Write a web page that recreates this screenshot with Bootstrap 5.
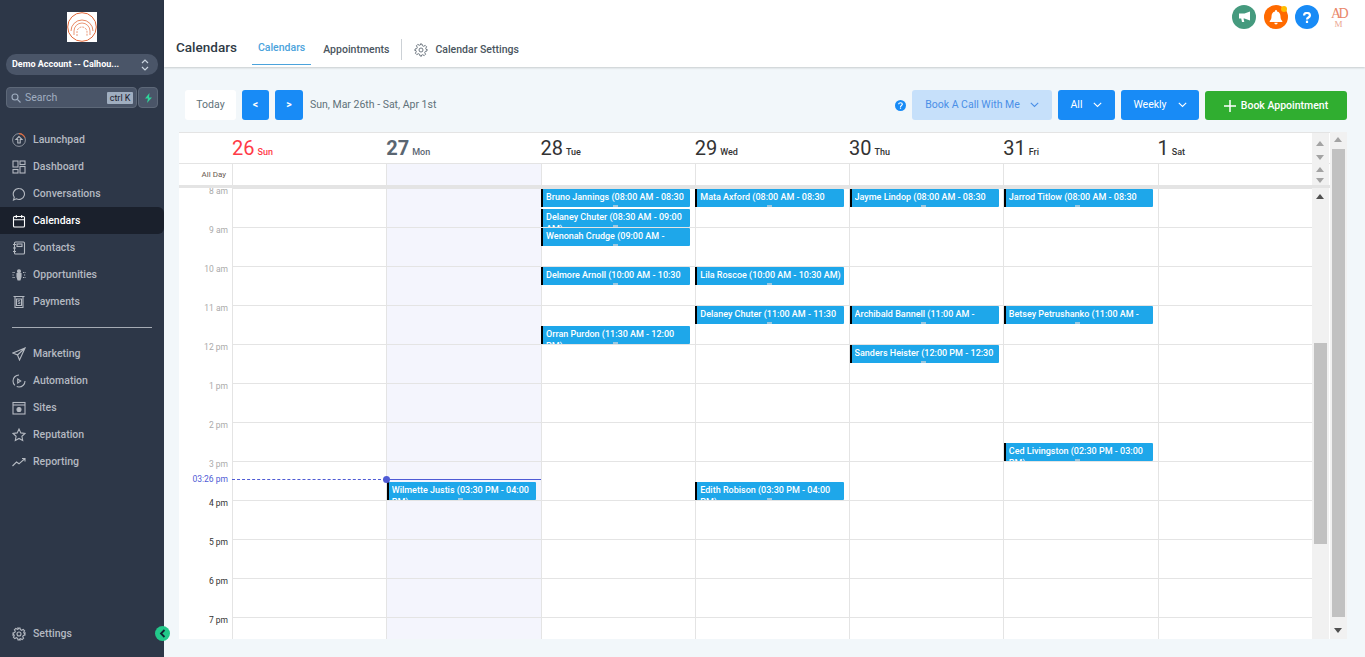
<!DOCTYPE html>
<html lang="en">
<head>
<meta charset="utf-8">
<title>Calendars</title>
<link href="https://cdn.jsdelivr.net/npm/bootstrap@5.3.0/dist/css/bootstrap.min.css" rel="stylesheet">
<style>
html,body{height:657px;overflow:hidden}
body{font-family:Roboto,"Liberation Sans",sans-serif;background:#f2f7fa;color:#3c4650}
.app-side{width:164px;height:657px;background:#2d3748;flex:none;position:relative}
.logo-box{width:30px;height:30px;background:#fff;margin:12px auto 12px}
.logo-box svg{display:block}
.acct-pill{margin:0 6px;height:21px;border-radius:10px;background:#4a5568;color:#fff;font-size:9px;font-weight:700;padding:0 9px 0 6px}
.acct-pill span{padding-top:1px}
.srch-row{margin:12px 6px 0;gap:1px;height:21px}
.srch-box{width:131px;background:#4a5568;border:1px solid #5d6878;border-radius:4px;color:#a0aec0;font-size:10.5px;padding:0 3px 0 4px}
.kbd-chip{background:#a0aec0;color:#1a202c;font-size:9px;padding:0 2.5px;line-height:12px;border-radius:1px}
.flash-box{width:20px;background:#4a5568;border:1px solid #5d6878;border-radius:4px}
.side-nav{margin-top:18px}
.side-link{height:27px;padding:0 0 0 12px;color:#b4b9c1;font-size:10.5px;font-weight:500;gap:7px;border-radius:0 6px 6px 0}
.side-link svg{width:14px;height:14px;flex:none;stroke:#b4b9c1;fill:none;stroke-width:1.1}
.side-link:hover{color:#b4b9c1}
.side-link.on{background:#1a202c;color:#fff}
.side-link.on svg{stroke:#fff}
.side-rule{border-top:1px solid #a5abb4;margin:12px 12px 12px;opacity:1}
.side-foot{margin-top:auto;margin-bottom:10px}
.tog-btn{position:absolute;left:155px;top:626px;width:15px;height:15px;border-radius:50%;background:#22c88a}
.top-bar{height:67px;background:#fff;box-shadow:0 1px 2px rgba(0,0,0,.18);position:relative;padding:0 18px 2px 12px}
.page-title{font-size:13.5px;line-height:16px;font-weight:500;color:#2f3a45;margin:0 15px 10px 0}
.tab-item{font-size:10.5px;font-weight:500;color:#4a5560;padding:0 6px;height:31px;margin-right:6px}
.tab-item.on{color:#4ba3dc;border-bottom:1px solid #4ba3dc;padding-bottom:2px}
.tab-sep{width:1px;height:21px;background:#ccd1d6;margin:0 12px 5px 0}
.tab-gear{margin-right:-1px}
.ico-round{width:24px;height:24px;border-radius:50%;flex:none;position:relative}
.ico-green{background:#459a7e}.ico-orange{background:#ff6a00}.ico-blue{background:#188bf6}
.bell-dot{position:absolute;top:1px;right:1px;width:6px;height:6px;border-radius:50%;background:#ffbc00}
.top-icons{position:absolute;right:18px;top:5px;gap:7.5px}
.adm-mark{width:17px;height:24px;margin-left:3.5px;color:#e9866a;font-family:"Liberation Serif",serif;font-size:14px;line-height:13px;text-align:center;letter-spacing:-2.5px;padding-top:2px}
.adm-mark span{display:block;font-size:9px;line-height:9px;letter-spacing:0;color:#eba58f}
.tool-bar{margin:23px 18px 12px 21px;height:30px;gap:6px}
.tool-end{gap:6px}
.act-btn{height:30px;font-size:10.5px;border:0;border-radius:3px;padding:0;display:inline-flex;align-items:center;justify-content:center;--bs-btn-font-size:10.5px}
.btn-today{width:51px;background:#fff;color:#607179}
.btn-nav{width:27px;background:#188bf6;color:#fff;font-weight:700}
.btn-nav2{width:28px}
.date-txt{font-size:10.5px;color:#607179;margin-left:1px}
.btn-soft{width:140px;background:#c6e0fa;color:#4a8fe7;gap:10px}
.btn-solid{background:#188bf6;color:#fff;gap:11px}
.btn-w1{width:57px}.btn-w2{width:78px}
.btn-go{width:142px;height:29px;margin-top:1px;background:#30ae30;color:#fff;font-weight:500;gap:5px}
.cal-shell{margin-left:15px;width:1167.5px;height:507px;background:#fff}
.cal-main{width:1151px;flex:none;height:507px}
.hd-row{display:grid;grid-template-columns:53px repeat(7,154.28px) 18px}
.hd-one{height:32px;border-top:1px solid #e4e4e4;border-bottom:1px solid #e4e4e4}
.hd-two{height:21px}
.hd-bar{height:3px;background:#e4e4e4;width:1151px}
.day-hd{padding:0;white-space:nowrap;line-height:30px;color:#333}
.day-num{font-size:20px;margin-right:-1px}
.day-nm{font-size:9px;font-weight:500}
.sun-red{color:#ff3b47}
.now-grey{color:#5a6672}.now-grey .day-num{font-weight:700}
.allday-lbl{font-size:8px;text-align:right;padding-right:6px;line-height:21px;color:#6a5a50}
.day-cell{border-left:1px solid #e4e4e4}
.tint{background:#f4f5fd}
.sb-track{background:#f1f1f1;width:17px;align-items:center}
.tri-up,.tri-dn{width:0;height:0;border-left:4px solid transparent;border-right:4px solid transparent}
.tri-up{border-bottom:5px solid #a3a3a3}
.tri-dn{border-top:5px solid #a3a3a3}
.tri-dark.tri-up{border-bottom-color:#505050}
.tri-dark.tri-dn{border-top-color:#505050}
.hd-sb{justify-content:center;gap:9px}
.hd-two .hd-sb{gap:6px}
.grid-body{display:grid;grid-template-columns:53px repeat(7,154.28px) 18px;height:451px;overflow:hidden;position:relative}
.time-col{margin-top:-2px;text-align:right;padding-right:4px;font-size:8.5px;color:#aaa}
.time-lbl{height:39px;line-height:10px}
.time-lbl.dark{color:#333}
.day-col{position:relative;border-left:1px solid #e4e4e4;background-image:repeating-linear-gradient(#e4e4e4 0 1px,transparent 1px 39px)}
.cal-ev{position:absolute;left:-.5px;width:149px;height:18px;background:#1ea7ea;border-left:2px solid #000;border-radius:0 1px 1px 0;color:#fff;font-size:9px;font-weight:500;line-height:12px;padding:2px 1px 0 3px;overflow:hidden}
.ev-txt{display:block;height:13px;overflow:hidden}
.half .ev-txt{height:16px}
.cal-ev::after{content:"";position:absolute;left:calc(50% - 4px);bottom:0;width:5px;height:2px;background:#9cc8e0}
.now-lbl{position:absolute;left:0;top:286px;width:49px;text-align:right;font-size:8.5px;line-height:10px;color:#4f5bd5}
.now-dash{position:absolute;left:53px;top:291px;width:154px;border-top:1px dashed #4f5bd5}
.now-solid{position:absolute;left:207px;top:291px;width:155px;border-top:1px solid #4f5bd5}
.now-dot{position:absolute;left:204px;top:288px;width:7px;height:7px;border-radius:50%;background:#4f5bd5}
.body-sb{justify-content:space-between;padding:6px 0 6px;position:relative}
.in-thumb{position:absolute;left:2px;top:155px;width:13px;height:201px;background:#c1c1c1}
.out-sb{width:16.5px;background:#f1f1f1;padding:5px 0 6px;position:relative}
.out-thumb{position:absolute;left:2px;top:17px;width:13px;height:468px;background:#c1c1c1}
</style>
</head>
<body>
<div class="d-flex">
<aside class="app-side d-flex flex-column">
  <div class="logo-box">
    <svg width="30" height="30" viewBox="0 0 30 30" fill="none" stroke="#e0683a"><circle cx="15" cy="15" r="14.3"/><path d="M4 19a11 11 0 0 1 22 0" stroke-width=".8"/><path d="M7 23v-4a8 8 0 0 1 16 0v4" stroke-width=".7"/><path d="M10 24v-4a5 5 0 0 1 10 0v4" stroke-dasharray="2 1" stroke-width=".7"/></svg>
  </div>
  <div class="acct-pill d-flex align-items-center justify-content-between">
    <span>Demo Account -- Calhou...</span>
    <svg width="8" height="14" viewBox="0 0 8 14" fill="none" stroke="#cbd5e0" stroke-width="1.2"><path d="M1 5l3-3 3 3M1 9l3 3 3-3"/></svg>
  </div>
  <div class="srch-row d-flex">
    <div class="srch-box d-flex align-items-center">
      <svg class="me-1" width="10" height="10" viewBox="0 0 10 10" fill="none" stroke="#a0aec0" stroke-width="1.1"><circle cx="4" cy="4" r="3"/><path d="M6.500 6.500L9.500 9.500"/></svg>
      <span>Search</span>
      <span class="kbd-chip ms-auto">ctrl K</span>
    </div>
    <div class="flash-box d-flex align-items-center justify-content-center">
      <svg width="9" height="10" viewBox="0 0 9 10"><path d="M5.500 0L1 5.500h3L3 10l5-5.500H5z" fill="#2fd49a"/></svg>
    </div>
  </div>
  <nav class="nav flex-column side-nav">
    <a class="nav-link side-link d-flex align-items-center" href="#"><svg viewBox="0 0 14 14"><circle cx="7" cy="7" r="6.400" stroke-width=".7"/><path d="M7 .6a6.400 6.400 0 0 1 5.800 4" stroke="#e0683a"/><path d="M7 3.500L4 6.500h1.800V10h2.400V6.500H10z"/></svg>Launchpad</a>
    <a class="nav-link side-link d-flex align-items-center" href="#"><svg viewBox="0 0 14 14"><rect x="1" y="1" width="5" height="6"/><rect x="8" y="1" width="5" height="3.500"/><rect x="1" y="9.500" width="5" height="3.500"/><rect x="8" y="6.500" width="5" height="6.500"/></svg>Dashboard</a>
    <a class="nav-link side-link d-flex align-items-center" href="#"><svg viewBox="0 0 14 14"><path d="M7 1.500a5.500 5.500 0 1 1-2.700 10.300L1.500 13l.8-2.800A5.500 5.500 0 0 1 7 1.500z"/></svg>Conversations</a>
    <a class="nav-link side-link on d-flex align-items-center" href="#"><svg viewBox="0 0 14 14"><rect x="1.500" y="2.500" width="11" height="10.500" rx="1"/><path d="M1.500 5.800h11M4.300 1v3M9.700 1v3"/></svg>Calendars</a>
    <a class="nav-link side-link d-flex align-items-center" href="#"><svg viewBox="0 0 14 14"><rect x="2.500" y="1" width="10" height="12" rx="1"/><rect x="5" y="3" width="5" height="2.500"/><path d="M1 3.500h3M1 7h3M1 10.500h3"/></svg>Contacts</a>
    <a class="nav-link side-link d-flex align-items-center" href="#"><svg viewBox="0 0 14 14"><circle cx="7" cy="3.200" r="1.500" fill="#b4b9c1"/><path d="M5 5.500h4v3.500l-1 3H6L5 9z" fill="#b4b9c1"/><path d="M.5 4.500h2.500M.5 7h1.500M.5 9.500H3M11 4.500h2.500M12 7h1.500M11 9.500h2.500" stroke-dasharray="1.200 .6"/></svg>Opportunities</a>
    <a class="nav-link side-link d-flex align-items-center" href="#"><svg viewBox="0 0 14 14"><path d="M1.500 1.500h11M3 1.500v11h8v-11M4.500 4h5v6.500h-5z"/><path d="M8 5.500H6.200v1.500h1.600v1.500H6" stroke-width=".8"/></svg>Payments</a>
    <hr class="side-rule">
    <a class="nav-link side-link d-flex align-items-center" href="#"><svg viewBox="0 0 14 14"><path d="M13 1L1 6l4.500 2L7.500 13zM13 1L5.500 8"/></svg>Marketing</a>
    <a class="nav-link side-link d-flex align-items-center" href="#"><svg viewBox="0 0 14 14"><path d="M7 1a6 6 0 1 0 6 6" stroke-dasharray="14 2"/><path d="M5.700 5l3 2-3 2z"/></svg>Automation</a>
    <a class="nav-link side-link d-flex align-items-center" href="#"><svg viewBox="0 0 14 14"><rect x="1" y="1.500" width="12" height="11.500"/><path d="M1 4h12"/><circle cx="7" cy="8.500" r="2" fill="#b4b9c1"/></svg>Sites</a>
    <a class="nav-link side-link d-flex align-items-center" href="#"><svg viewBox="0 0 14 14"><path d="M7 1l1.800 3.900 4.200.5-3.100 2.900.8 4.200L7 10.500l-3.700 2 .8-4.200L1 5.400l4.200-.5z"/></svg>Reputation</a>
    <a class="nav-link side-link d-flex align-items-center" href="#"><svg viewBox="0 0 14 14"><path d="M.5 11l4-4 2.500 1.800L13 3.500M10 3.500h3v3"/></svg>Reporting</a>
  </nav>
  <div class="side-foot">
    <a class="nav-link side-link d-flex align-items-center" href="#"><svg viewBox="0 0 14 14"><circle cx="7" cy="7" r="2"/><path d="M6 1h2l.4 1.700 1.300.6 1.500-.9 1.400 1.400-.9 1.500.6 1.300L13 6v2l-1.700.4-.6 1.300.9 1.500-1.400 1.400-1.500-.9-1.300.6L8 13H6l-.4-1.700-1.300-.6-1.500.9-1.400-1.400.9-1.500-.6-1.300L1 8V6l1.700-.4.6-1.300-.9-1.500 1.400-1.400 1.500.9 1.300-.6z"/></svg>Settings</a>
  </div>
  <div class="tog-btn d-flex align-items-center justify-content-center">
    <svg width="7" height="9" viewBox="0 0 7 9" fill="none" stroke="#123" stroke-width="1.800"><path d="M5.500 1L2 4.500 5.500 8"/></svg>
  </div>
</aside>

<main class="flex-grow-1">
  <header class="top-bar d-flex align-items-end">
    <h1 class="page-title">Calendars</h1>
    <a class="tab-item on d-flex align-items-center text-decoration-none" href="#">Calendars</a>
    <a class="tab-item d-flex align-items-center text-decoration-none" href="#">Appointments</a>
    <span class="tab-sep"></span>
    <a class="tab-item d-flex align-items-center text-decoration-none gap-2 px-0" href="#">
      <svg class="tab-gear" width="14" height="14" viewBox="0 0 14 14" fill="none" stroke="#606a74" stroke-width=".9"><circle cx="7" cy="7" r="2"/><path d="M6 1h2l.4 1.700 1.300.6 1.500-.9 1.400 1.400-.9 1.500.6 1.300L13 6v2l-1.700.4-.6 1.300.9 1.500-1.400 1.400-1.500-.9-1.300.6L8 13H6l-.4-1.700-1.300-.6-1.500.9-1.400-1.400.9-1.500-.6-1.300L1 8V6l1.700-.4.6-1.300-.9-1.500 1.400-1.400 1.500.9 1.300-.6z"/></svg>
      Calendar Settings
    </a>
    <div class="top-icons d-flex">
      <span class="ico-round ico-green d-flex align-items-center justify-content-center"><svg width="13" height="12" viewBox="0 0 13 12" fill="#fff"><path d="M12 .5v9L6.500 7.500H5.500l.8 3.500H4L3.200 7.500H1V2.500h5.500z"/></svg></span>
      <span class="ico-round ico-orange d-flex align-items-center justify-content-center"><svg width="14" height="15" viewBox="0 0 14 15" fill="#fff"><path d="M7 0a1 1 0 0 1 1 1v.6C10.300 2 11.500 4 11.500 6.500c0 2.500.7 3.500 1.800 4.500v1H.7v-1c1.100-1 1.800-2 1.800-4.500C2.500 4 3.700 2 6 1.600V1a1 1 0 0 1 1-1zM5.300 12.800h3.400a1.700 1.700 0 0 1-3.400 0z"/></svg><span class="bell-dot"></span></span>
      <span class="ico-round ico-blue d-flex align-items-center justify-content-center"><svg width="8" height="11" viewBox="0 0 10 14" fill="none" stroke="#fff" stroke-width="2.800"><path d="M1.300 4.500C1.300 2.500 3 1.300 5 1.300s3.700 1.200 3.700 3.200C8.700 7 5 7 5 9.500"/><path d="M5 11v3"/></svg></span>
      <span class="adm-mark">AD<span>M</span></span>
    </div>
  </header>

  <div class="tool-bar d-flex align-items-center">
    <button class="btn act-btn btn-today" type="button">Today</button>
    <button class="btn act-btn btn-nav" type="button">&lt;</button>
    <button class="btn act-btn btn-nav btn-nav2" type="button">&gt;</button>
    <span class="date-txt">Sun, Mar 26th - Sat, Apr 1st</span>
    <div class="tool-end ms-auto d-flex align-items-center">
      <svg width="11" height="11" viewBox="0 0 12 12"><circle cx="6" cy="6" r="6" fill="#188bf6"/><path d="M4 4.700C4 3.500 5 3 6 3s2 .6 2 1.700C8 6 6 6 6 7.500M6 8.300v1.300" stroke="#fff" stroke-width="1.300" fill="none"/></svg>
      <button class="btn act-btn btn-soft" type="button">Book A Call With Me <svg width="9" height="6" viewBox="0 0 9 6" fill="none" stroke="#4a8fe7" stroke-width="1.100"><path d="M.8.800L4.500 4.500 8.200.8"/></svg></button>
      <button class="btn act-btn btn-solid btn-w1" type="button">All <svg width="9" height="6" viewBox="0 0 9 6" fill="none" stroke="#fff" stroke-width="1.100"><path d="M.8.800L4.500 4.500 8.200.8"/></svg></button>
      <button class="btn act-btn btn-solid btn-w2" type="button">Weekly <svg width="9" height="6" viewBox="0 0 9 6" fill="none" stroke="#fff" stroke-width="1.100"><path d="M.8.800L4.500 4.500 8.200.8"/></svg></button>
      <button class="btn act-btn btn-go" type="button"><svg width="12" height="12" viewBox="0 0 12 12" stroke="#fff" stroke-width="1.500"><path d="M6 0v12M0 6h12"/></svg>Book Appointment</button>
    </div>
  </div>

  <section class="cal-shell d-flex">
    <div class="cal-main">
      <div class="hd-row hd-one">
        <div></div>
        <div class="day-hd sun-red"><span class="day-num">26</span> <span class="day-nm">Sun</span></div>
        <div class="day-hd now-grey"><span class="day-num">27</span> <span class="day-nm">Mon</span></div>
        <div class="day-hd"><span class="day-num">28</span> <span class="day-nm">Tue</span></div>
        <div class="day-hd"><span class="day-num">29</span> <span class="day-nm">Wed</span></div>
        <div class="day-hd"><span class="day-num">30</span> <span class="day-nm">Thu</span></div>
        <div class="day-hd"><span class="day-num">31</span> <span class="day-nm">Fri</span></div>
        <div class="day-hd"><span class="day-num">1</span> <span class="day-nm">Sat</span></div>
        <div class="sb-track hd-sb d-flex flex-column"><span class="tri-up"></span><span class="tri-dn"></span></div>
      </div>
      <div class="hd-row hd-two">
        <div class="allday-lbl">All Day</div>
        <div class="day-cell"></div><div class="day-cell tint"></div><div class="day-cell"></div><div class="day-cell"></div><div class="day-cell"></div><div class="day-cell"></div><div class="day-cell"></div>
        <div class="sb-track hd-sb d-flex flex-column"><span class="tri-up"></span><span class="tri-dn"></span></div>
      </div>
      <div class="hd-bar"></div>
      <div class="grid-body">
        <div class="time-col">
          <div class="time-lbl">8 am</div><div class="time-lbl">9 am</div><div class="time-lbl">10 am</div><div class="time-lbl">11 am</div><div class="time-lbl">12 pm</div><div class="time-lbl">1 pm</div><div class="time-lbl">2 pm</div><div class="time-lbl">3 pm</div>
          <div class="time-lbl dark">4 pm</div><div class="time-lbl dark">5 pm</div><div class="time-lbl dark">6 pm</div><div class="time-lbl dark">7 pm</div>
        </div>
        <div class="day-col"></div>
        <div class="day-col tint">
          <div class="cal-ev half" style="top:294px"><span class="ev-txt">Wilmette Justis (03:30 PM - 04:00 PM)</span></div>
        </div>
        <div class="day-col">
          <div class="cal-ev" style="top:1px"><span class="ev-txt">Bruno Jannings (08:00 AM - 08:30 AM)</span></div>
          <div class="cal-ev half" style="top:21px"><span class="ev-txt">Delaney Chuter (08:30 AM - 09:00 AM)</span></div>
          <div class="cal-ev" style="top:40px"><span class="ev-txt">Wenonah Crudge (09:00 AM - 09:30 AM)</span></div>
          <div class="cal-ev" style="top:79px"><span class="ev-txt">Delmore Arnoll (10:00 AM - 10:30 AM)</span></div>
          <div class="cal-ev half" style="top:138px"><span class="ev-txt">Orran Purdon (11:30 AM - 12:00 PM)</span></div>
        </div>
        <div class="day-col">
          <div class="cal-ev" style="top:1px"><span class="ev-txt">Mata Axford (08:00 AM - 08:30 AM)</span></div>
          <div class="cal-ev" style="top:79px"><span class="ev-txt">Lila Roscoe (10:00 AM - 10:30 AM)</span></div>
          <div class="cal-ev" style="top:118px"><span class="ev-txt">Delaney Chuter (11:00 AM - 11:30 AM)</span></div>
          <div class="cal-ev half" style="top:294px"><span class="ev-txt">Edith Robison (03:30 PM - 04:00 PM)</span></div>
        </div>
        <div class="day-col">
          <div class="cal-ev" style="top:1px"><span class="ev-txt">Jayme Lindop (08:00 AM - 08:30 AM)</span></div>
          <div class="cal-ev" style="top:118px"><span class="ev-txt">Archibald Bannell (11:00 AM - 11:30 AM)</span></div>
          <div class="cal-ev" style="top:157px"><span class="ev-txt">Sanders Heister (12:00 PM - 12:30 PM)</span></div>
        </div>
        <div class="day-col">
          <div class="cal-ev" style="top:1px"><span class="ev-txt">Jarrod Titlow (08:00 AM - 08:30 AM)</span></div>
          <div class="cal-ev" style="top:118px"><span class="ev-txt">Betsey Petrushanko (11:00 AM - 11:30 AM)</span></div>
          <div class="cal-ev half" style="top:255px"><span class="ev-txt">Ced Livingston (02:30 PM - 03:00 PM)</span></div>
        </div>
        <div class="day-col"></div>
        <div class="sb-track body-sb d-flex flex-column"><span class="tri-up tri-dark"></span><span class="in-thumb"></span><span class="tri-dn tri-dark"></span></div>
        <span class="now-lbl">03:26 pm</span>
        <span class="now-dash"></span>
        <span class="now-solid"></span>
        <span class="now-dot"></span>
      </div>
    </div>
    <div class="out-sb d-flex flex-column justify-content-between align-items-center">
      <span class="tri-up"></span><span class="out-thumb"></span><span class="tri-dn tri-dark"></span>
    </div>
  </section>
</main>
</div>
</body>
</html>
